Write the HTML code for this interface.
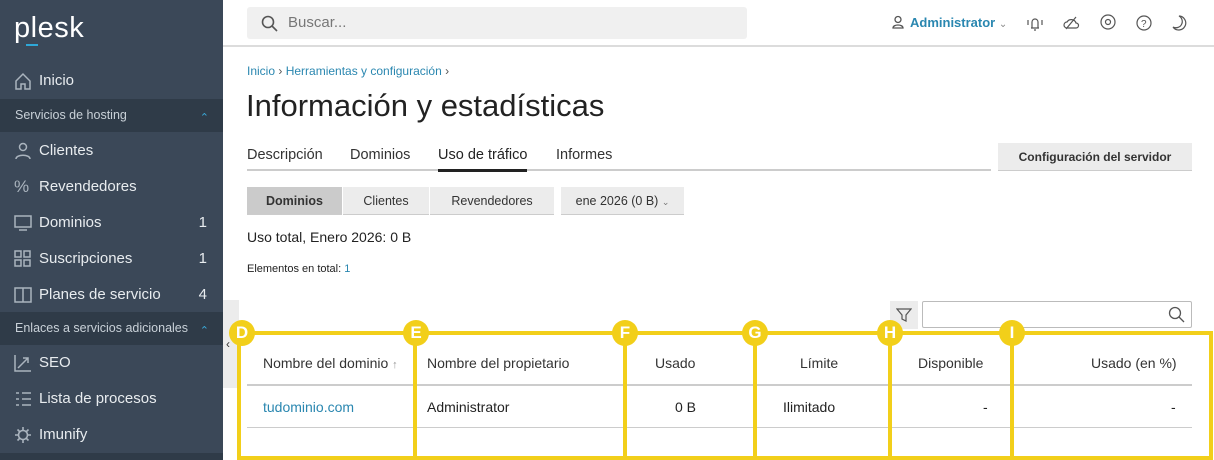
<!DOCTYPE html>
<html><head><meta charset="utf-8"><style>
*{box-sizing:border-box;margin:0;padding:0}
body{width:1214px;height:460px;overflow:hidden;background:#fff;font-family:"Liberation Sans",sans-serif;color:#222;position:relative}
.sb{position:absolute;left:0;top:0;width:223px;height:460px;background:#3b4858;color:#e8ecef}
.logo{position:absolute;left:14px;top:12px;font-size:29px;color:#fff;letter-spacing:0.5px}
.logo i{position:absolute;left:12px;top:32px;width:12px;height:2px;background:#2ea8d8}
.it{position:absolute;left:0;width:223px;height:36px;font-size:15px;line-height:36px;padding-left:39px}
.it svg{position:absolute;left:14px;top:9px}
.it b{position:absolute;right:16px;font-weight:normal}
.sec{position:absolute;left:0;width:223px;height:33px;background:#2f3b48;font-size:12.5px;line-height:33px;padding-left:15px;color:#c9d1d8}
.sec:after{content:"⌃";position:absolute;right:14px;top:3px;color:#3aa8d8;font-size:11px}
.top{position:absolute;left:223px;top:0;right:0;height:47px;border-bottom:2px solid #dcdcdc}
.search{position:absolute;left:24px;top:7px;width:500px;height:32px;background:#f0f0f0;border-radius:3px;font-size:15px;color:#777;line-height:32px;padding-left:41px}
.adm{position:absolute;left:687px;top:15px;font-size:13px;color:#2a87b0;font-weight:bold}
.bc{position:absolute;left:247px;top:64px;font-size:12px;color:#2a87b0}
h1{position:absolute;left:246px;top:88px;font-size:31px;font-weight:normal;color:#222}
.tabs{position:absolute;left:247px;top:147px;width:744px;height:24px;border-bottom:2px solid #ccc;font-size:14.5px}
.tabs span{position:absolute;top:0;color:#333}
.btn{position:absolute;background:#ececec;border-bottom:1px solid #ccc;font-size:12.5px;text-align:center;color:#333}
.ylw{position:absolute;border:4px solid #f2cf1a}
.vl{position:absolute;top:332px;width:4px;height:128px;background:#f2cf1a}
.cir{position:absolute;top:320px;width:26px;height:26px;border-radius:50%;background:#f2cf1a;color:#fff;font-weight:bold;font-size:17px;text-align:center;line-height:26px}
.th{position:absolute;top:355px;font-size:14px;color:#333}
.td{position:absolute;top:399px;font-size:14px;color:#222}
.hl{position:absolute;left:247px;width:945px;background:#ccc}
</style></head><body>
<div class="sb">
<div class="logo">plesk<i></i></div>
<div class="it" style="top:63px"><svg width="18" height="18" fill="none" stroke="#aab4be" stroke-width="1.5"><path d="M2 9L9 2l7 7v8h-5v-5H7v5H2z"/></svg>Inicio</div>
<div class="sec" style="top:99px">Servicios de hosting</div>
<div class="it" style="top:133px"><svg width="18" height="18" fill="none" stroke="#aab4be" stroke-width="1.5"><circle cx="9" cy="5" r="3.5"/><path d="M2 17c0-5 14-5 14 0"/></svg>Clientes</div>
<div class="it" style="top:169px"><span style="position:absolute;left:14px;color:#aab4be;font-size:17px">%</span>Revendedores</div>
<div class="it" style="top:205px"><svg width="18" height="18" fill="none" stroke="#aab4be" stroke-width="1.5"><rect x="1" y="2" width="16" height="11"/><path d="M5 16h8"/></svg>Dominios<b>1</b></div>
<div class="it" style="top:241px"><svg width="18" height="18" fill="none" stroke="#aab4be" stroke-width="1.5"><rect x="1" y="1" width="6" height="6"/><rect x="10" y="1" width="6" height="6"/><rect x="1" y="10" width="6" height="6"/><rect x="10" y="10" width="6" height="6"/></svg>Suscripciones<b>1</b></div>
<div class="it" style="top:277px"><svg width="18" height="18" fill="none" stroke="#aab4be" stroke-width="1.5"><rect x="1" y="2" width="16" height="14"/><path d="M9 2v14"/></svg>Planes de servicio<b>4</b></div>
<div class="sec" style="top:312px">Enlaces a servicios adicionales</div>
<div class="it" style="top:345px"><svg width="18" height="18" fill="none" stroke="#aab4be" stroke-width="1.5"><path d="M1 1v16h16M4 14l10-10M9 4h5v5"/></svg>SEO</div>
<div class="it" style="top:381px"><svg width="18" height="18" fill="none" stroke="#aab4be" stroke-width="1.5"><path d="M2 3h3M2 9h3M2 15h3M8 3h9M8 9h9M8 15h9"/></svg>Lista de procesos</div>
<div class="it" style="top:417px"><svg width="18" height="18" fill="none" stroke="#aab4be" stroke-width="1.6"><circle cx="9" cy="9" r="4.5"/><path d="M9 1v3M9 14v3M1 9h3M14 9h3M3.5 3.5l2 2M12.5 12.5l2 2M3.5 14.5l2-2M12.5 5.5l2-2"/></svg>Imunify</div>
<div style="position:absolute;left:0;top:453px;width:223px;height:7px;background:#2f3b48"></div>
</div>
<div style="position:absolute;left:223px;top:300px;width:16px;height:88px;background:#ececec;font-size:12px;line-height:88px;padding-left:3px;color:#333">‹</div>
<div class="top"><div class="search"><svg style="position:absolute;left:14px;top:8px" width="17" height="17" fill="none" stroke="#555" stroke-width="1.6"><circle cx="7" cy="7" r="5.5"/><path d="M11 11l5 5"/></svg>Buscar...</div>
<svg style="position:absolute;left:668px;top:15px" width="14" height="14" fill="none" stroke="#555" stroke-width="1.3"><circle cx="7" cy="4.5" r="3"/><path d="M2 13c0-4 10-4 10 0z"/></svg>
<div class="adm">Administrator <span style="color:#888;font-weight:normal;font-size:10px">⌄</span></div>
<svg style="position:absolute;left:803px;top:14px" width="18" height="18" fill="none" stroke="#555" stroke-width="1.2"><path d="M5 14h8M6 14V8a3 3 0 0 1 6 0v6M8 16h2M2 6v5M16 6v5"/></svg>
<svg style="position:absolute;left:839px;top:14px" width="18" height="18" fill="none" stroke="#555" stroke-width="1.2"><path d="M5 14a3 3 0 0 1 0-6a5 5 0 0 1 9 1a2.5 2.5 0 0 1 0 5zM4 15L14 3"/></svg>
<svg style="position:absolute;left:876px;top:13px" width="18" height="18" fill="none" stroke="#555" stroke-width="1.2"><circle cx="9" cy="9" r="7"/><circle cx="9" cy="9" r="2.5"/></svg>
<svg style="position:absolute;left:912px;top:14px" width="18" height="18" fill="none" stroke="#555" stroke-width="1.2"><circle cx="9" cy="9" r="7"/><text x="6" y="13" font-size="10" fill="#555" stroke="none" font-family="Liberation Sans">?</text></svg>
<svg style="position:absolute;left:948px;top:14px" width="18" height="18" fill="none" stroke="#555" stroke-width="1.2"><path d="M8 2a7 7 0 1 1-6 11a6 6 0 0 0 6-11z"/></svg>
</div>
<div class="bc">Inicio <span style="color:#555">›</span> Herramientas y configuración <span style="color:#555">›</span></div>
<h1>Información y estadísticas</h1>
<div class="tabs"><span style="left:0">Descripción</span><span style="left:103px">Dominios</span><span style="left:191px;color:#222;border-bottom:3px solid #222;padding-bottom:3px;height:25px">Uso de tráfico</span><span style="left:309px">Informes</span></div>
<div class="btn" style="left:998px;top:143px;width:194px;height:28px;line-height:28px;font-weight:bold;font-size:12px">Configuración del servidor</div>
<div class="btn" style="left:247px;top:187px;width:95px;height:28px;line-height:28px;background:#cbcbcb;font-weight:bold">Dominios</div>
<div class="btn" style="left:343px;top:187px;width:86px;height:28px;line-height:28px">Clientes</div>
<div class="btn" style="left:430px;top:187px;width:124px;height:28px;line-height:28px">Revendedores</div>
<div class="btn" style="left:561px;top:187px;width:123px;height:28px;line-height:28px">ene 2026 (0 B) <span style="font-size:9px;color:#777">⌄</span></div>
<div style="position:absolute;left:247px;top:229px;font-size:14px">Uso total, Enero 2026: 0 B</div>
<div style="position:absolute;left:247px;top:263px;font-size:11px">Elementos en total: <span style="color:#2a87b0">1</span></div>
<div style="position:absolute;left:890px;top:301px;width:28px;height:28px;background:#ececec"><svg style="position:absolute;left:6px;top:6px" width="16" height="16" fill="none" stroke="#555" stroke-width="1.2"><path d="M1 2h14l-5 6v6l-4-2V8z"/></svg></div>
<div style="position:absolute;left:922px;top:301px;width:270px;height:27px;border:1px solid #bbb;border-radius:2px"><svg style="position:absolute;right:6px;top:4px" width="17" height="17" fill="none" stroke="#555" stroke-width="1.3"><circle cx="7" cy="7" r="5.5"/><path d="M11 11l5 5"/></svg></div>
<div class="hl" style="top:384px;height:2px"></div>
<div class="hl" style="top:427px;height:1px"></div>
<div class="th" style="left:263px">Nombre del dominio <span style="color:#999;font-size:11px">↑</span></div>
<div class="th" style="left:427px">Nombre del propietario</div>
<div class="th" style="left:655px">Usado</div>
<div class="th" style="left:800px">Límite</div>
<div class="th" style="left:918px">Disponible</div>
<div class="th" style="left:1091px">Usado (en %)</div>
<div class="td" style="left:263px;color:#2a87b0">tudominio.com</div>
<div class="td" style="left:427px">Administrator</div>
<div class="td" style="left:675px">0 B</div>
<div class="td" style="left:783px">Ilimitado</div>
<div class="td" style="left:983px">-</div>
<div class="td" style="left:1171px">-</div>
<div class="ylw" style="left:237px;top:331px;width:976px;height:129px"></div>
<div class="vl" style="left:413px"></div><div class="vl" style="left:623px"></div><div class="vl" style="left:753px"></div><div class="vl" style="left:888px"></div><div class="vl" style="left:1010px"></div>
<div class="cir" style="left:229px">D</div><div class="cir" style="left:403px">E</div><div class="cir" style="left:612px">F</div><div class="cir" style="left:742px">G</div><div class="cir" style="left:877px">H</div><div class="cir" style="left:999px">I</div>
</body></html>
